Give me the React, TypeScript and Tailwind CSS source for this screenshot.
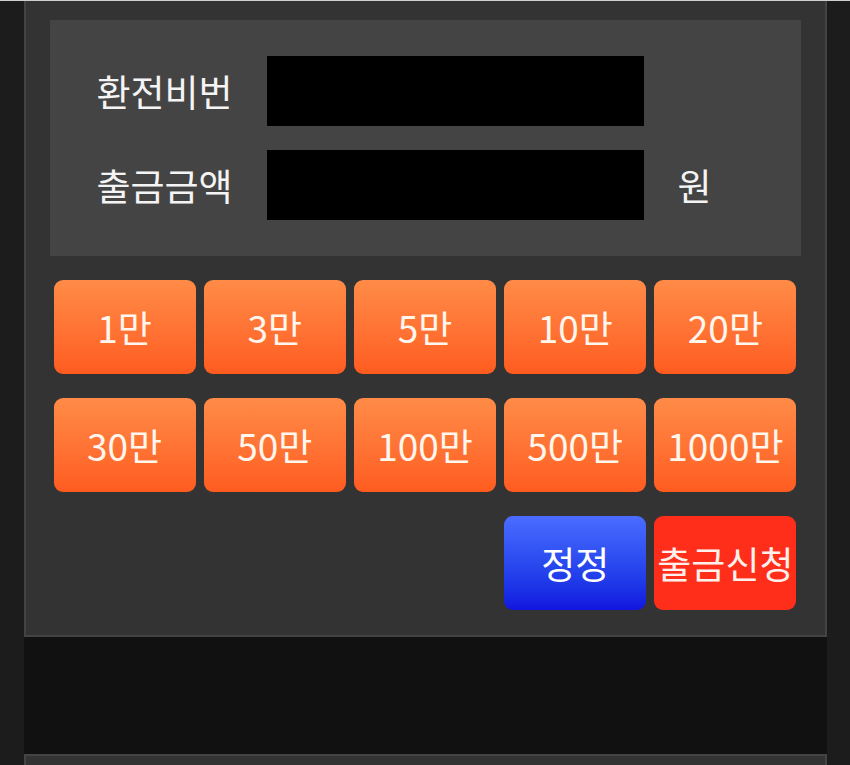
import React from "react";

const amounts1 = ["1만", "3만", "5만", "10만", "20만"];
const amounts2 = ["30만", "50만", "100만", "500만", "1000만"];

function OrangeBtn({ label }: { label: string }) {
  return (
    <button className="h-[94px] rounded-[9px] bg-gradient-to-b from-[#ff8b47] to-[#ff5b1f] text-[37px] leading-none text-[#fff6ee] flex items-center justify-center">
      {label}
    </button>
  );
}

export default function App() {
  return (
    <div
      className="w-[850px] h-[765px] bg-[#1c1c1c] border-t border-[#cfcfcf] overflow-hidden flex flex-col items-center"
      style={{ fontFamily: '"Noto Sans CJK KR", "Noto Sans", sans-serif' }}
    >
      <div className="w-[803px] flex flex-col">
        <div className="bg-[#333333] border-x-2 border-b-2 border-[#434343] pt-[19px] px-[24px] pb-[25px]">
          <div className="bg-[#444444] pt-[36px] pb-[36px] pl-[47px] flex flex-col gap-[24px]">
            <div className="flex items-center">
              <div className="w-[170px] text-[37px] text-[#f4f4f4] leading-none">환전비번</div>
              <div className="w-[377px] h-[70px] bg-black"></div>
            </div>
            <div className="flex items-center">
              <div className="w-[170px] text-[37px] text-[#f4f4f4] leading-none">출금금액</div>
              <div className="w-[377px] h-[70px] bg-black"></div>
              <div className="ml-[34px] text-[37px] text-[#f4f4f4] leading-none">원</div>
            </div>
          </div>
          <div className="mt-[24px] px-[4px] grid grid-cols-5 gap-x-[8px] gap-y-[24px]">
            {amounts1.map((a) => (
              <OrangeBtn key={a} label={a} />
            ))}
            {amounts2.map((a) => (
              <OrangeBtn key={a} label={a} />
            ))}
            <div></div>
            <div></div>
            <div></div>
            <button className="h-[94px] rounded-[9px] bg-gradient-to-b from-[#4b6cff] to-[#1313df] text-[37px] leading-none text-white flex items-center justify-center">
              정정
            </button>
            <button className="h-[94px] rounded-[9px] bg-[#ff2e1b] text-[37px] leading-none text-[#fff0ec] flex items-center justify-center whitespace-nowrap">
              출금신청
            </button>
          </div>
        </div>
        <div className="h-[117px] bg-[#111111]"></div>
        <div className="h-[20px] bg-[#333333] border-x-2 border-t-2 border-[#444444]"></div>
      </div>
    </div>
  );
}
